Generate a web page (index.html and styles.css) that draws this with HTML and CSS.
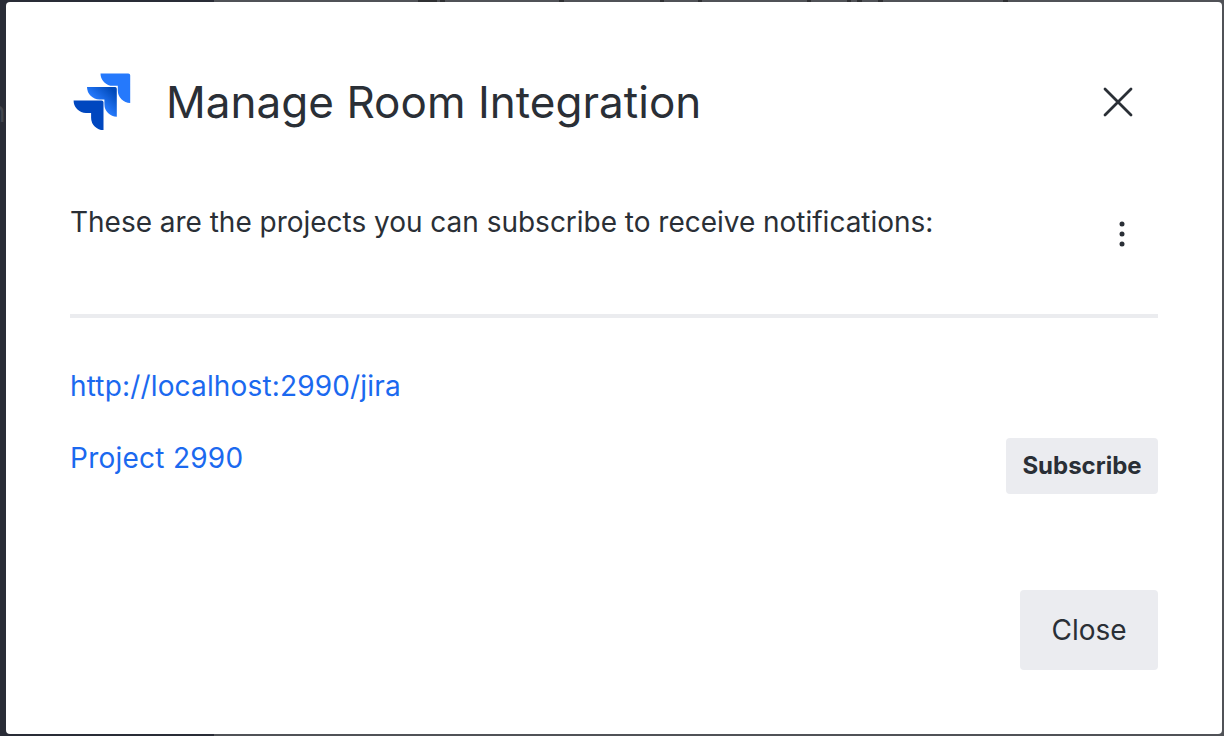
FILE: index.html
```
<!DOCTYPE html>
<html lang="en">
<head>
<meta charset="utf-8">
<title>Manage Room Integration</title>
<link rel="stylesheet" href="styles.css">
</head>
<body>
<div class="backdrop">
  <svg class="backdrop-text" width="1224" height="2" viewBox="0 0 1224 2" aria-hidden="true">
    <path d="M418 0h19v2h-19zM440 0h5v2h-5zM559 0h5v2h-5zM660 0h4v2h-4zM698 0h4v2h-4zM807 0h4v2h-4zM847 0h4v2h-4zM857 0h5v2h-5zM878 0h5v2h-5zM1003 0h5v2h-5z"/>
  </svg>
  <span class="backdrop-letter">n</span>
  <main class="modal">
    <header class="header">
      <svg class="logo" width="64" height="64" viewBox="0 0 64 64" aria-hidden="true">
        <defs>
          <linearGradient id="mid" x1="46" y1="17" x2="30" y2="34" gradientUnits="userSpaceOnUse">
            <stop offset=".18" stop-color="#0049b8"/><stop offset="1" stop-color="#2579fc"/>
          </linearGradient>
        </defs>
        <path fill="#2579fc" d="M30.500 3.400H58.300A1.900 1.900 0 0 1 60.200 5.300V33A12.400 12.400 0 0 1 47.800 20.600V15.800H42.900A12.400 12.400 0 0 1 30.500 3.400Z"/>
        <path fill="url(#mid)" d="M17 17.100H45A1.700 1.700 0 0 1 46.800 18.800V46.700A12.400 12.400 0 0 1 34.400 34.300V29.500H29.400A12.400 12.400 0 0 1 17 17.100Z"/>
        <path fill="#0047bf" d="M3.600 30.400H31.600A1.900 1.900 0 0 1 33.500 32.300V60.100A12.400 12.400 0 0 1 21.100 47.700V42.900H16A12.400 12.400 0 0 1 3.600 30.400Z"/>
      </svg>
      <h1 class="title">Manage Room Integration</h1>
      <button class="icon-button" aria-label="Close dialog">
        <svg width="32" height="32" viewBox="0 0 32 32"><path class="cross" d="M3 3L29 29M29 3L3 29"/></svg>
      </button>
    </header>
    <section class="intro">
      <p class="text">These are the projects you can subscribe to receive notifications:</p>
      <button class="menu-button" aria-label="More options">
        <svg width="8" height="28" viewBox="0 0 8 28"><circle cx="4" cy="4" r="2.500"/><circle cx="4" cy="14" r="2.500"/><circle cx="4" cy="24" r="2.500"/></svg>
      </button>
    </section>
    <hr class="divider">
    <a class="link server">http://localhost:2990/jira</a>
    <section class="project">
      <a class="link name">Project 2990</a>
      <button class="button subscribe">Subscribe</button>
    </section>
    <footer class="footer">
      <button class="button close">Close</button>
    </footer>
  </main>
</div>
</body>
</html>
```
FILE: styles.css
```
* { box-sizing: border-box; }
body { margin: 0; font-family: Inter, "Liberation Sans", sans-serif; color: #2a2f36; }
button { border: 0; margin: 0; padding: 0; background: none; font-family: inherit; color: inherit; }
svg { display: block; }
.backdrop {
  position: relative;
  height: 736px;
  padding: 2px 2px 2px 6px;
  overflow: hidden;
  background: linear-gradient(90deg, #292c36 214px, #505257 214px);
}
.backdrop-text { position: absolute; top: 0; left: 0; fill: #2f3033; }
.backdrop-letter { position: absolute; left: -11px; top: 95px; font-size: 28px; line-height: 34px; color: #42464e; }
.modal {
  position: relative;
  height: 732px;
  padding: 68px 64px 64px;
  border-radius: 4px;
  background: #fff;
}
.header { display: flex; align-items: center; height: 64px; }
.title { flex: 1; margin: 0 0 0 32px; font-size: 44px; line-height: 64px; font-weight: 400; letter-spacing: 0.03px; white-space: nowrap; }
.icon-button { margin-right: 24px; }
.cross { fill: none; stroke: #2a2f36; stroke-width: 2.800; stroke-linecap: round; }
.intro { display: flex; justify-content: space-between; height: 180px; padding-top: 68px; }
.text { margin: 0; font-size: 28px; line-height: 40px; letter-spacing: -0.02px; white-space: nowrap; }
.menu-button { height: 28px; margin: 18px 32px 0 0; fill: #2a2f36; }
.divider { height: 4px; margin: 0; border: 0; background: #ebecef; }
.link { display: block; font-size: 28px; line-height: 40px; color: #1b69ef; white-space: nowrap; }
.server { margin-top: 48px; letter-spacing: 0.16px; }
.name { letter-spacing: 0.25px; }
.project { display: flex; justify-content: space-between; margin-top: 32px; }
.button { border-radius: 4px; background: #ebecf0; }
.subscribe { width: 152px; height: 56px; padding-bottom: 2px; font-size: 24px; font-weight: 700; }
.footer { display: flex; justify-content: flex-end; margin-top: 96px; }
.close { width: 138px; height: 80px; font-size: 28px; }
```
